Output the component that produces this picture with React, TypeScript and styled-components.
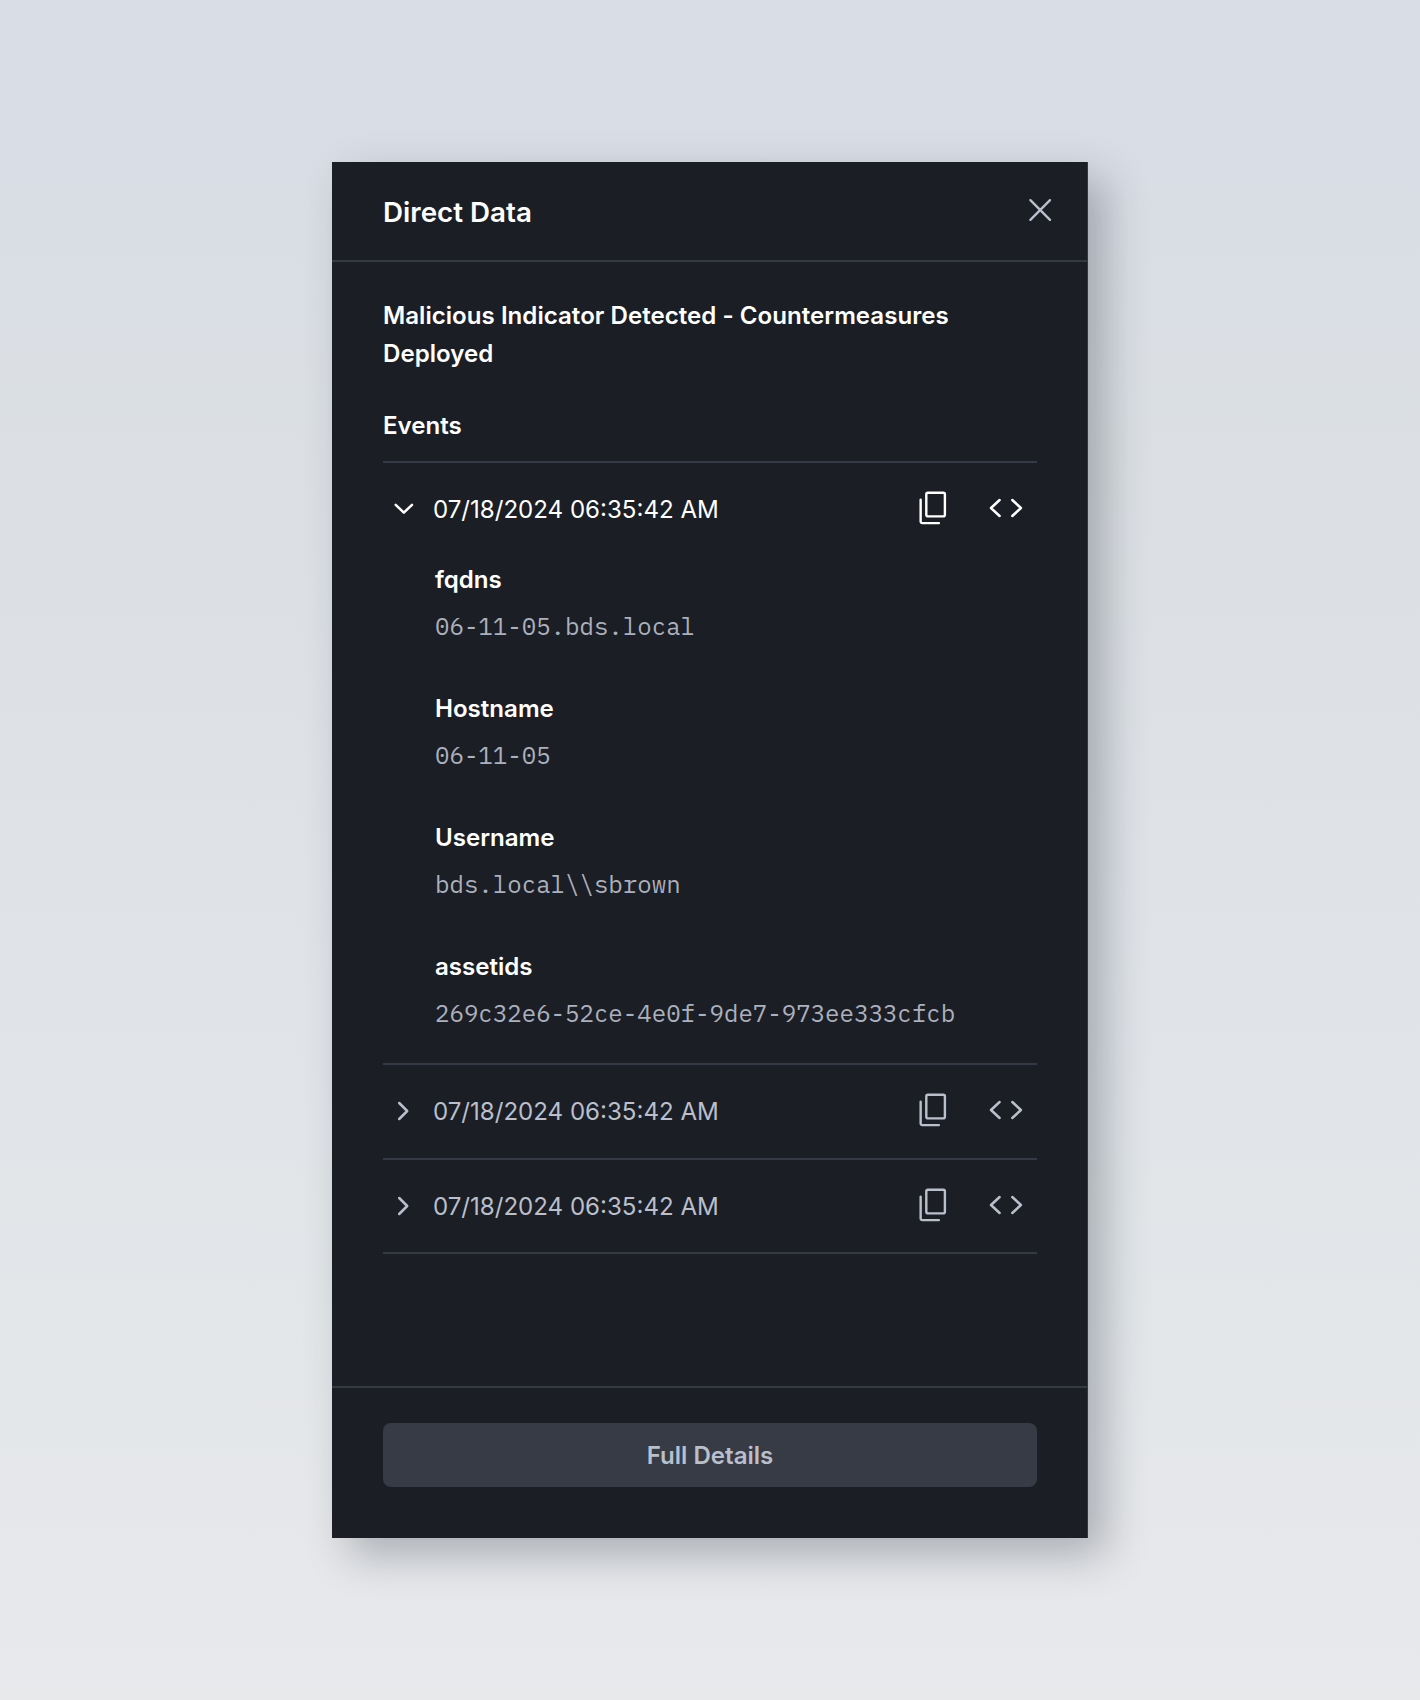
import React from "react";
import styled, { createGlobalStyle } from "styled-components";

const GlobalStyle = createGlobalStyle`
  *, *::before, *::after { box-sizing: border-box; }
  body {
    margin: 0;
    font-family: Inter, "Liberation Sans", sans-serif;
    font-size: 24.08px;
    -webkit-font-smoothing: antialiased;
  }
  h1, h2, h3, dl, dt, dd { margin: 0; font-size: inherit; }
`;

const colors = {
  panel: "#1b1e25",
  edge: "#343840",
  line: "#343943",
  white: "#ffffff",
  muted: "#b9bfcb",
  mono: "#abb0bd",
  button: "#363b46",
};

const Page = styled.main`
  width: 1420px;
  height: 1700px;
  padding-top: 162px;
  display: flex;
  justify-content: center;
  align-items: flex-start;
  background: linear-gradient(180deg, #d8dde6 0%, #d9dee5 14%, #dbdfe3 25%, #dfe2e7 50%, #e2e6e9 75%, #e7e8eb 93%, #e8e9eb 100%);
`;

const Panel = styled.section`
  width: 756px;
  height: 1376px;
  display: flex;
  flex-direction: column;
  background: ${colors.panel};
  color: ${colors.white};
  box-shadow: 17px 17px 40px rgba(24, 34, 44, 0.29), inset -1px 0 ${colors.edge};
`;

const Header = styled.header`
  height: 100px;
  padding: 0 34px 0 51px;
  display: flex;
  align-items: center;
  justify-content: space-between;
  border-bottom: 2px solid ${colors.line};
`;

const Title = styled.h1`
  font-size: 27.75px;
  line-height: 36px;
  font-weight: 600;
  padding-top: 2px;
`;

const IconButton = styled.button<{ $tone?: string }>`
  display: flex;
  padding: 0;
  border: 0;
  background: none;
  color: ${(p) => p.$tone || "inherit"};
`;

const CloseButton = styled(IconButton)`
  margin-bottom: 3px;
`;

const Body = styled.div`
  flex: 1;
  padding: 35px 51px 0;
`;

const Alert = styled.h2`
  font-size: 24.08px;
  font-weight: 600;
  line-height: 38px;
  letter-spacing: 0.025px;
`;

const SectionTitle = styled.h3`
  margin-top: 34px;
  height: 54px;
  line-height: 38px;
  font-weight: 600;
`;

const EventItem = styled.article<{ $open?: boolean }>`
  border-top: 2px solid ${colors.line};
  color: ${(p) => (p.$open ? colors.white : colors.muted)};
  height: ${(p) => (p.$open ? "602px" : "95px")};
  &:last-child {
    height: 96px;
    border-bottom: 2px solid ${colors.line};
  }
`;

const EventRow = styled.div`
  height: 92px;
  padding: 0 14px 0 7px;
  display: flex;
  align-items: center;
`;

const Toggle = styled.span`
  display: flex;
  width: 28px;
  height: 28px;
  margin-right: 15px;
`;

const Timestamp = styled.time`
  flex: 1;
  line-height: 38px;
  padding-top: 1px;
`;

const Actions = styled.div`
  display: flex;
  align-items: center;
  gap: 42px;
  padding-bottom: 3px;
`;

const Fields = styled.dl`
  padding: 6px 0 0 52px;
  display: grid;
  row-gap: 43px;
`;

const Field = styled.div`
  height: 86px;
`;

const Name = styled.dt`
  font-weight: 600;
  line-height: 38px;
  color: ${colors.white};
`;

const Value = styled.dd`
  && {
    margin-top: 8px;
  }
  font-family: "IBM Plex Mono", "Liberation Mono", monospace;
  line-height: 38px;
  color: ${colors.mono};
`;

const Footer = styled.footer`
  height: 152px;
  padding: 34.5px 51px 0;
  border-top: 2px solid ${colors.line};
`;

const DetailsButton = styled.button`
  width: 100%;
  height: 64px;
  padding: 3px 0 0;
  border: 0;
  border-radius: 8px;
  background: ${colors.button};
  color: ${colors.muted};
  font: 600 24.08px/38px Inter, "Liberation Sans", sans-serif;
`;

const stroke = {
  fill: "none",
  stroke: "currentColor",
  strokeLinecap: "round" as const,
  strokeLinejoin: "round" as const,
};

const CloseIcon = () => (
  <svg width="28" height="28" viewBox="0 0 28 28" {...stroke} strokeWidth="2.4">
    <path d="M4.4 4.2L24 23.8M24 4.2L4.4 23.8" />
  </svg>
);

const Chevron = ({ open }: { open?: boolean }) => (
  <svg width="28" height="28" viewBox="0 0 28 28" {...stroke} strokeWidth="2.5">
    <path d={open ? "M5.7 9.8L13.85 17.6L22 9.8" : "M9.2 6L17.2 14L9.2 22"} />
  </svg>
);

const CopyIcon = () => (
  <svg width="28" height="34" viewBox="0 0 28 34" {...stroke} strokeWidth="2.4">
    <rect x="7.3" y="1.8" width="18.6" height="23.6" rx="1.6" />
    <path d="M1.65 8.8V30.5a1.6 1.6 0 0 0 1.6 1.6H19.9" />
  </svg>
);

const CodeIcon = () => (
  <svg width="34" height="20" viewBox="0 0 34 20" {...stroke} strokeWidth="2.5">
    <path d="M10.6 2L2 10L10.6 18M23.3 2L31.9 10L23.3 18" />
  </svg>
);

const fields = [
  { name: "fqdns", value: "06-11-05.bds.local" },
  { name: "Hostname", value: "06-11-05" },
  { name: "Username", value: "bds.local\\\\sbrown" },
  { name: "assetids", value: "269c32e6-52ce-4e0f-9de7-973ee333cfcb" },
];

const events = [
  { id: 1, time: "07/18/2024 06:35:42 AM", fields },
  { id: 2, time: "07/18/2024 06:35:42 AM" },
  { id: 3, time: "07/18/2024 06:35:42 AM" },
];

export default function App() {
  return (
    <>
      <GlobalStyle />
      <Page>
        <Panel>
          <Header>
            <Title>Direct Data</Title>
            <CloseButton $tone={colors.muted} aria-label="Close">
              <CloseIcon />
            </CloseButton>
          </Header>
          <Body>
            <Alert>Malicious Indicator Detected - Countermeasures Deployed</Alert>
            <SectionTitle>Events</SectionTitle>
            {events.map((event) => (
              <EventItem key={event.id} $open={!!event.fields}>
                <EventRow>
                  <Toggle>
                    <Chevron open={!!event.fields} />
                  </Toggle>
                  <Timestamp>{event.time}</Timestamp>
                  <Actions>
                    <IconButton aria-label="Copy">
                      <CopyIcon />
                    </IconButton>
                    <IconButton aria-label="View source">
                      <CodeIcon />
                    </IconButton>
                  </Actions>
                </EventRow>
                {event.fields && (
                  <Fields>
                    {event.fields.map((f) => (
                      <Field key={f.name}>
                        <Name>{f.name}</Name>
                        <Value>{f.value}</Value>
                      </Field>
                    ))}
                  </Fields>
                )}
              </EventItem>
            ))}
          </Body>
          <Footer>
            <DetailsButton>Full Details</DetailsButton>
          </Footer>
        </Panel>
      </Page>
    </>
  );
}
